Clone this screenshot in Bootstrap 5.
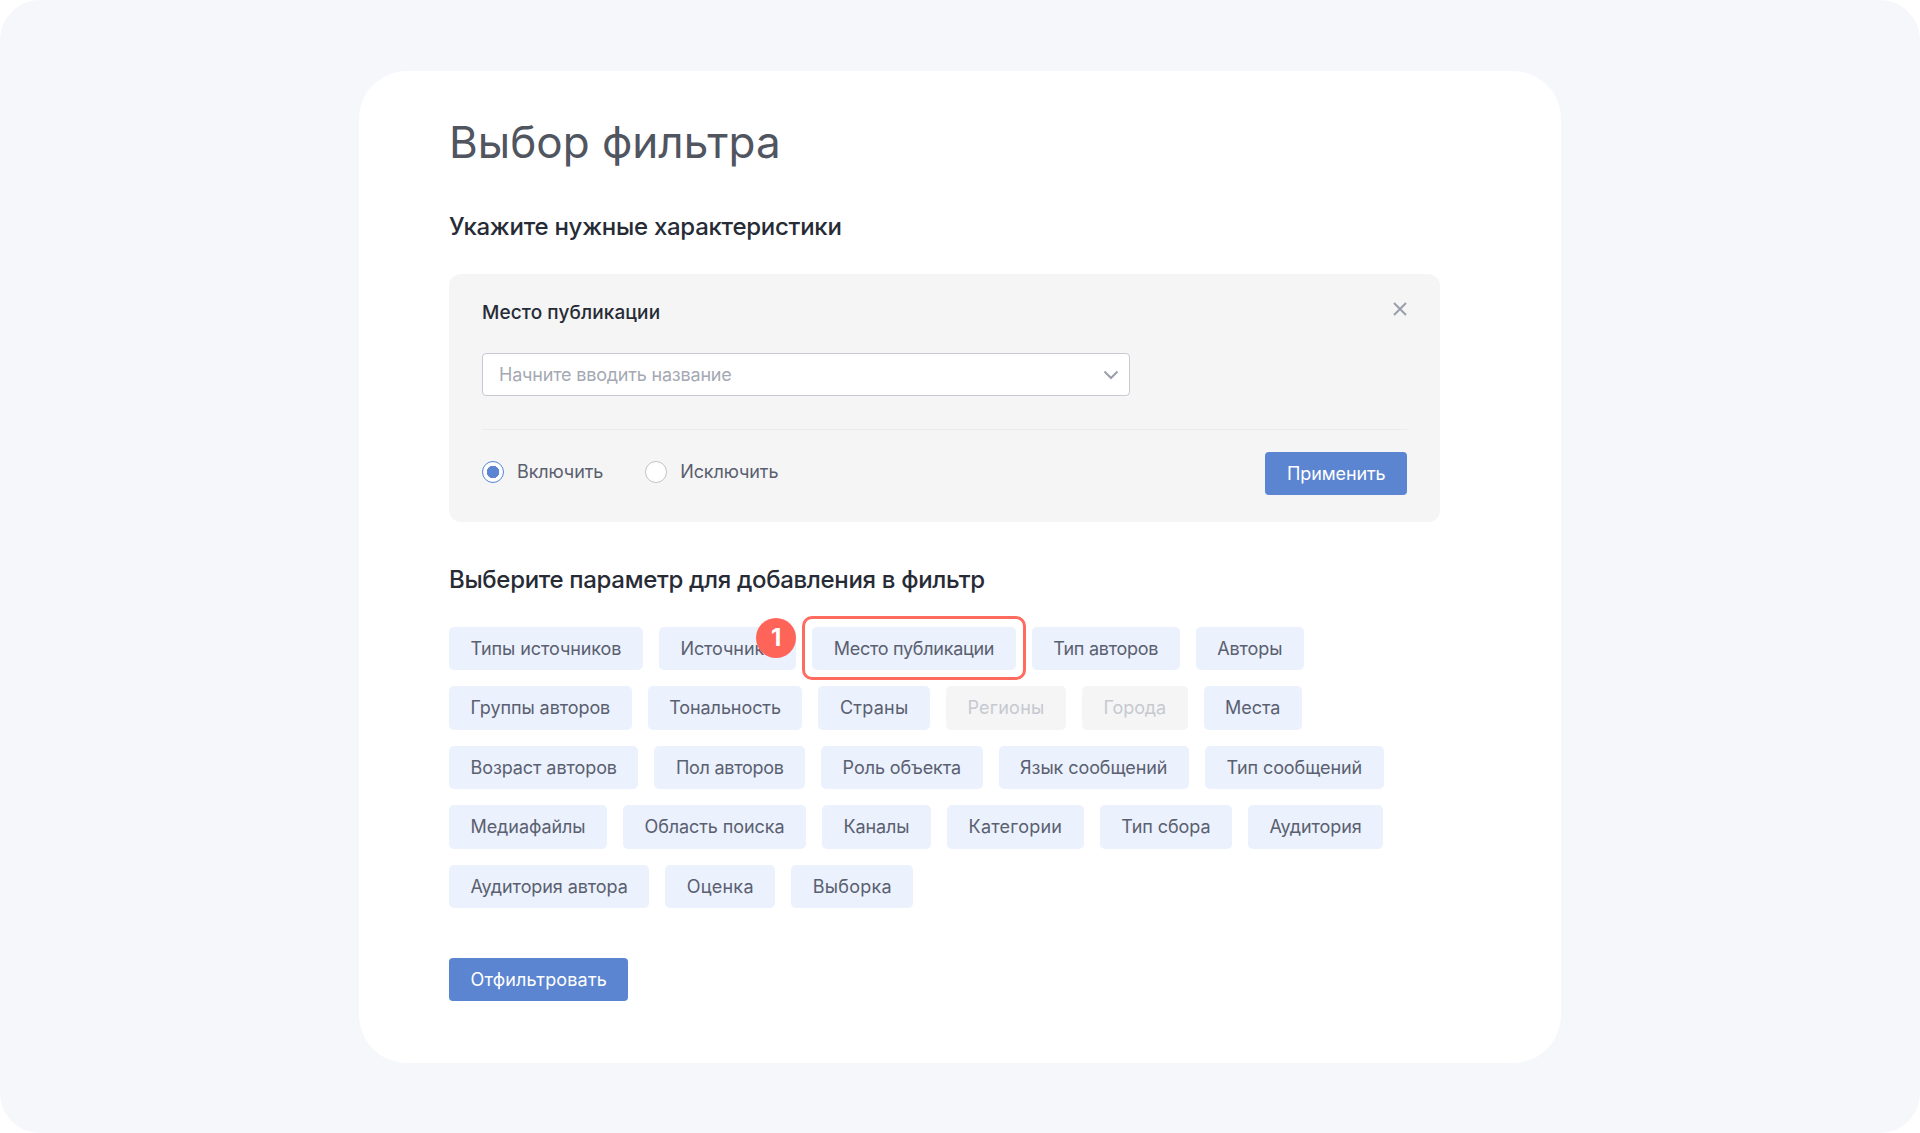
<!doctype html>
<html lang="ru">
    <head>
        <meta charset="UTF-8" />
        <meta name="viewport" content="width=device-width, initial-scale=1.0" />
        <title>Выбор фильтра</title>
        <link
            href="https://cdn.jsdelivr.net/npm/bootstrap@5.3.0/dist/css/bootstrap.min.css"
            rel="stylesheet"
        />
        <style>
            body {
                background: #fff;
                font-family: "Inter", "Noto Sans", sans-serif;
            }
            .page-bg {
                min-height: 100vh;
                background: #f5f7fb;
                border-radius: 40px;
            }
            .filter-panel {
                width: 1202px;
                height: 992px;
                background: #fff;
                border-radius: 48px;
                padding: 43px 90px 0;
            }
            .filter-title {
                font-size: 44px;
                font-weight: 400;
                line-height: 56px;
                color: #50555f;
                margin-bottom: 41px;
            }
            .filter-subtitle {
                font-size: 24px;
                font-weight: 500;
                line-height: 32px;
                letter-spacing: -0.26px;
                color: #262b36;
                margin-bottom: 31px;
            }
            .subtitle-chips {
                letter-spacing: -0.33px;
            }
            .param-box {
                width: 991px;
                height: 248px;
                background: #f5f5f5;
                border-radius: 12px;
                padding: 27px 33px 0;
                margin-bottom: 42px;
            }
            .box-label {
                font-size: 19px;
                font-weight: 500;
                line-height: 24px;
                letter-spacing: 0.1px;
                color: #262b36;
                margin-bottom: 28px;
            }
            .box-close {
                position: absolute;
                top: 28px;
                right: 33px;
                line-height: 0;
            }
            .search-wrap {
                width: 648px;
            }
            .search-input {
                height: 43px;
                font-size: 18px;
                letter-spacing: -0.2px;
                color: #50555f;
                padding: 0 44px 0 16px;
                border: 1px solid #c8cad3;
                border-radius: 4px;
            }
            .search-input::placeholder {
                color: #a5a9b3;
            }
            .search-chevron {
                position: absolute;
                top: 17px;
                right: 11px;
                line-height: 0;
            }
            .box-divider {
                margin: 33px 0 22px;
                border-color: #ebebeb;
                opacity: 1;
            }
            .radio-row {
                gap: 42px;
                padding-top: 9px;
            }
            .radio-row .form-check {
                margin: 0;
                padding-left: 35px;
                min-height: 22px;
                font-size: 18px;
                line-height: 22px;
                letter-spacing: -0.1px;
                color: #5a6070;
            }
            .radio-row .form-check-input {
                width: 22px;
                height: 22px;
                margin: 0 0 0 -35px;
                border: 1px solid #c0c3cd;
                background-color: #fff;
            }
            .radio-row .form-check-input:checked {
                border-color: #5b85d1;
                background-image: radial-gradient(circle, #5b85d1 0 6px, #fff 6.5px);
            }
            .btn-apply {
                height: 43px;
                padding: 0 21.5px;
                font-size: 18px;
                line-height: 43px;
                letter-spacing: -0.1px;
                color: #fff;
                background: #5b85d1;
                border: 0;
                border-radius: 4px;
            }
            .btn-run {
                letter-spacing: 0.15px;
            }
            .chip-list {
                gap: 16px;
                margin-bottom: 50px;
            }
            .chip {
                height: 43.5px;
                padding: 0 21.5px;
                font-size: 18px;
                line-height: 43px;
                letter-spacing: -0.08px;
                color: #5a6070;
                background: #ebf1fd;
                border: 0;
                border-radius: 5px;
            }
            .chip-narrow {
                letter-spacing: -0.28px;
            }
            .chip-wide {
                letter-spacing: 0.25px;
            }
            .chip.disabled {
                color: #c6c9d0;
                background: #f5f5f5;
                opacity: 1;
            }
            .chip-ring {
                position: absolute;
                inset: -11px -10px -10px -10px;
                border: 3px solid #ff6b5e;
                border-radius: 10px;
                pointer-events: none;
            }
            .chip-badge {
                position: absolute;
                top: -9px;
                left: -56px;
                width: 40px;
                height: 40px;
                border-radius: 50%;
                background: #ff6459;
                color: #fff;
                font-size: 24px;
                font-weight: 700;
                line-height: 40px;
                letter-spacing: 0;
                text-align: center;
            }
        </style>
    </head>
    <body>
        <div class="page-bg d-flex justify-content-center align-items-center">
            <div class="filter-panel">
                <h1 class="filter-title">Выбор фильтра</h1>
                <h2 class="filter-subtitle">Укажите нужные характеристики</h2>

                <div class="param-box position-relative">
                    <div class="box-label">Место публикации</div>
                    <span class="box-close">
                        <svg width="14" height="14" viewBox="0 0 14 14" fill="none" stroke="#9a9eab" stroke-width="2">
                            <path d="M1 1l12 12M13 1L1 13" />
                        </svg>
                    </span>
                    <div class="search-wrap position-relative">
                        <input class="form-control search-input" type="text" placeholder="Начните вводить название" />
                        <span class="search-chevron">
                            <svg width="16" height="10" viewBox="0 0 16 10" fill="none" stroke="#9a9eab" stroke-width="2">
                                <path d="M1.5 1.5L8 8l6.5-6.5" />
                            </svg>
                        </span>
                    </div>
                    <hr class="box-divider" />
                    <div class="d-flex justify-content-between align-items-start">
                        <div class="radio-row d-flex">
                            <div class="form-check">
                                <input class="form-check-input" type="radio" name="mode" id="modeOn" checked />
                                <label class="form-check-label" for="modeOn">Включить</label>
                            </div>
                            <div class="form-check">
                                <input class="form-check-input" type="radio" name="mode" id="modeOff" />
                                <label class="form-check-label" for="modeOff">Исключить</label>
                            </div>
                        </div>
                        <button class="btn btn-apply" type="button">Применить</button>
                    </div>
                </div>

                <h2 class="filter-subtitle subtitle-chips">Выберите параметр для добавления в фильтр</h2>

                <div class="chip-list d-flex flex-wrap">
                    <button class="btn chip" type="button">Типы источников</button>
                    <button class="btn chip" type="button">Источники</button>
                    <button class="btn chip chip-narrow position-relative" type="button">
                        Место публикации
                        <span class="chip-ring"></span>
                        <span class="chip-badge">1</span>
                    </button>
                    <button class="btn chip chip-narrow" type="button">Тип авторов</button>
                    <button class="btn chip" type="button">Авторы</button>
                    <button class="btn chip" type="button">Группы авторов</button>
                    <button class="btn chip" type="button">Тональность</button>
                    <button class="btn chip chip-wide" type="button">Страны</button>
                    <button class="btn chip chip-wide disabled" type="button">Регионы</button>
                    <button class="btn chip disabled" type="button">Города</button>
                    <button class="btn chip" type="button">Места</button>
                    <button class="btn chip" type="button">Возраст авторов</button>
                    <button class="btn chip chip-narrow" type="button">Пол авторов</button>
                    <button class="btn chip" type="button">Роль объекта</button>
                    <button class="btn chip" type="button">Язык сообщений</button>
                    <button class="btn chip" type="button">Тип сообщений</button>
                    <button class="btn chip" type="button">Медиафайлы</button>
                    <button class="btn chip" type="button">Область поиска</button>
                    <button class="btn chip" type="button">Каналы</button>
                    <button class="btn chip chip-wide" type="button">Категории</button>
                    <button class="btn chip" type="button">Тип сбора</button>
                    <button class="btn chip" type="button">Аудитория</button>
                    <button class="btn chip" type="button">Аудитория автора</button>
                    <button class="btn chip chip-wide" type="button">Оценка</button>
                    <button class="btn chip chip-wide" type="button">Выборка</button>
                </div>

                <button class="btn btn-apply btn-run" type="button">Отфильтровать</button>
            </div>
        </div>

        <script src="https://cdn.jsdelivr.net/npm/bootstrap@5.3.0/dist/js/bootstrap.bundle.min.js"></script>
    </body>
</html>
